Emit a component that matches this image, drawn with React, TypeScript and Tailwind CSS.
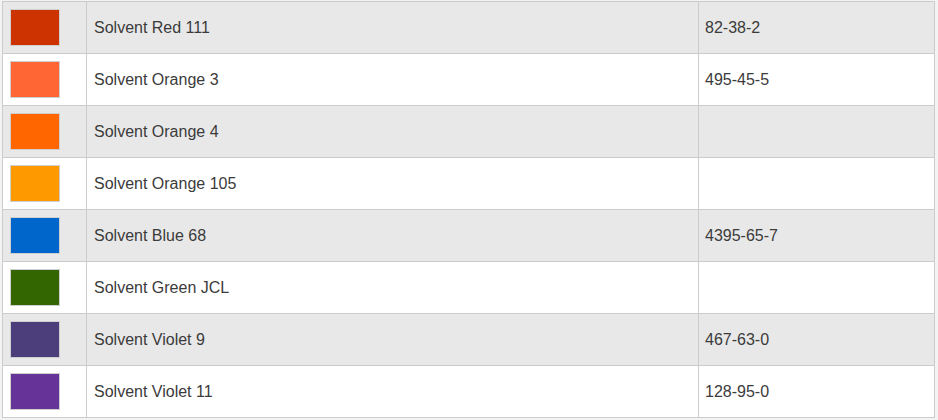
const rows = [
  { color: "#cc3300", name: "Solvent Red 111", cas: "82-38-2" },
  { color: "#ff6633", name: "Solvent Orange 3", cas: "495-45-5" },
  { color: "#ff6600", name: "Solvent Orange 4", cas: "" },
  { color: "#ff9900", name: "Solvent Orange 105", cas: "" },
  { color: "#0066cc", name: "Solvent Blue 68", cas: "4395-65-7" },
  { color: "#336600", name: "Solvent Green JCL", cas: "" },
  { color: "#4b3e7b", name: "Solvent Violet 9", cas: "467-63-0" },
  { color: "#663399", name: "Solvent Violet 11", cas: "128-95-0" },
]

export default function App() {
  return (
    <div className="h-[420px] w-[938px] bg-[#f3f3f3] pl-[2px] pt-[1px] font-['Liberation_Sans',Arial,sans-serif] text-[16px] text-[#3b3b3b]">
      <div className="w-[933px] border-l border-t border-[#cccccc]">
        {rows.map((row, i) => (
          <div
            key={row.name}
            className={
              "flex h-[52px] border-b border-[#cccccc] " +
              (i % 2 === 0 ? "bg-[#e8e8e8]" : "bg-white")
            }
          >
            <div className="flex w-[84px] items-center border-r border-[#cccccc] pl-[7px]">
              <div
                className="h-[37px] w-[50px] border border-[#cfcfcf]"
                style={{ backgroundColor: row.color }}
              />
            </div>
            <div className="flex w-[612px] items-center border-r border-[#cccccc] pl-[7px]">
              {row.name}
            </div>
            <div className="flex w-[236px] items-center border-r border-[#cccccc] pl-[6px]">
              {row.cas}
            </div>
          </div>
        ))}
      </div>
    </div>
  )
}
